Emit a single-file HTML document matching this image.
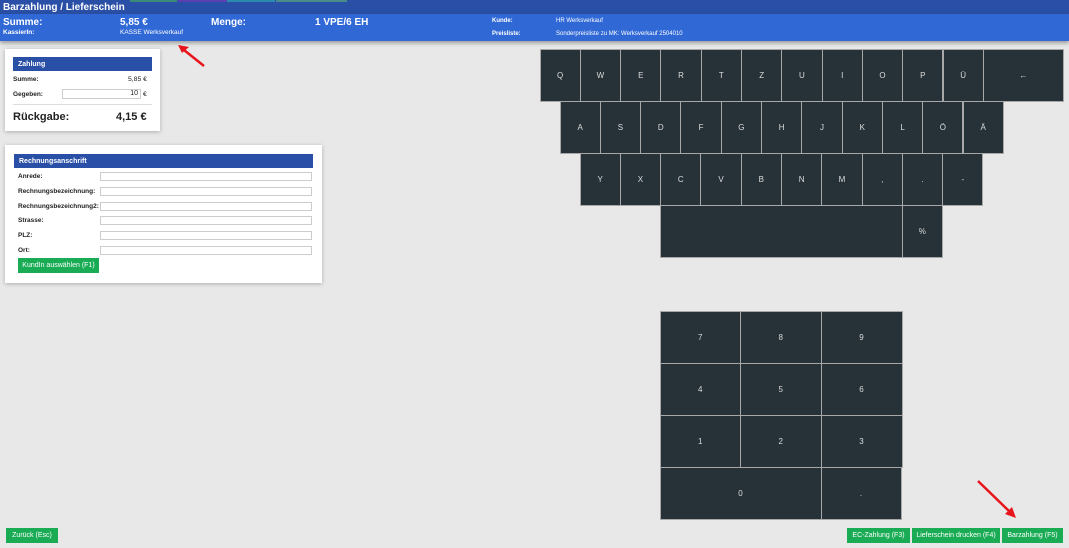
<!DOCTYPE html>
<html><head><meta charset="utf-8"><style>
*{box-sizing:border-box;margin:0;padding:0}
body{width:1069px;height:548px;background:#e8e8e8;font-family:"Liberation Sans",sans-serif;position:relative;overflow:hidden;color:#222}
.a{position:absolute}
.top1{left:0;top:0;width:1069px;height:14px;background:#2a4fa6}
.top2{left:0;top:14px;width:1069px;height:27px;background:#3068d6;box-shadow:0 2px 4px rgba(0,0,0,.35)}
.w{color:#fff}
.k{position:absolute;background:#263238;border:1px solid #a8a8a8;color:#ddd;font-size:8px;display:flex;align-items:center;justify-content:center}
.card{background:#fff;box-shadow:0 1px 4px rgba(0,0,0,.25)}
.hd{background:#2a4fa6;color:#fff;font-weight:bold;font-size:7px;padding-left:5px;display:flex;align-items:center}
.lb{font-size:6.5px;font-weight:bold}
.in{border:1px solid #ccc;background:#fff;height:9px}
.btn{position:absolute;background:#1aab55;color:#fff;font-size:7px;display:flex;align-items:center;justify-content:center;height:15px;top:528px;white-space:nowrap}
</style></head><body>
<div class="a top1"></div>
<div class="a" style="left:130px;top:0;width:47px;height:2px;background:#3a8a7a"></div>
<div class="a" style="left:178px;top:0;width:49px;height:2px;background:#5a3fb0"></div>
<div class="a" style="left:227px;top:0;width:48px;height:2px;background:#2a8ab0"></div>
<div class="a" style="left:276px;top:0;width:71px;height:2px;background:#4a8a8a"></div>
<div class="a w" style="left:3px;top:2px;font-size:10px;font-weight:bold">Barzahlung / Lieferschein</div>
<div class="a top2"></div>
<div class="a w" style="left:3px;top:17px;font-size:10px;font-weight:bold">Summe:</div>
<div class="a w" style="left:120px;top:17px;font-size:10px;font-weight:bold">5,85 €</div>
<div class="a w" style="left:211px;top:17px;font-size:10px;font-weight:bold">Menge:</div>
<div class="a w" style="left:315px;top:17px;font-size:10px;font-weight:bold">1 VPE/6 EH</div>
<div class="a w" style="left:3px;top:29px;font-size:6.5px;font-weight:bold">KassierIn:</div>
<div class="a w" style="left:120px;top:29px;font-size:6.5px">KASSE Werksverkauf</div>
<div class="a w" style="left:492px;top:18px;font-size:6px;font-weight:bold">Kunde:</div>
<div class="a w" style="left:556px;top:18px;font-size:6px">HR Werksverkauf</div>
<div class="a w" style="left:492px;top:31px;font-size:6px;font-weight:bold">Preisliste:</div>
<div class="a w" style="left:556px;top:31px;font-size:6px">Sonderpreisliste zu MK: Werksverkauf 2504010</div>

<div class="a card" style="left:5px;top:49px;width:155px;height:82px"></div>
<div class="a hd" style="left:13px;top:57px;width:139px;height:14px">Zahlung</div>
<div class="a lb" style="left:13px;top:76px">Summe:</div>
<div class="a" style="left:128px;top:76px;font-size:6.8px">5,85 €</div>
<div class="a lb" style="left:13px;top:91px">Gegeben:</div>
<div class="a in" style="left:62px;top:89px;width:79px;height:10px;font-size:7px;text-align:right;padding-right:2px;line-height:8px">10</div>
<div class="a" style="left:143px;top:91px;font-size:6.8px">€</div>
<div class="a" style="left:13px;top:104px;width:139px;height:1px;background:#ddd"></div>
<div class="a" style="left:13px;top:111px;font-size:11px;font-weight:bold">Rückgabe:</div>
<div class="a" style="left:116px;top:111px;font-size:11px;font-weight:bold">4,15 €</div>

<div class="a card" style="left:5px;top:145px;width:317px;height:138px"></div>
<div class="a hd" style="left:14px;top:154px;width:299px;height:14px">Rechnungsanschrift</div>
<div class="a lb" style="left:18px;top:173px">Anrede:</div>
<div class="a in" style="left:100px;top:172px;width:212px"></div>
<div class="a lb" style="left:18px;top:188px">Rechnungsbezeichnung:</div>
<div class="a in" style="left:100px;top:187px;width:212px"></div>
<div class="a lb" style="left:18px;top:203px">Rechnungsbezeichnung2:</div>
<div class="a in" style="left:100px;top:202px;width:212px"></div>
<div class="a lb" style="left:18px;top:217px">Strasse:</div>
<div class="a in" style="left:100px;top:216px;width:212px"></div>
<div class="a lb" style="left:18px;top:232px">PLZ:</div>
<div class="a in" style="left:100px;top:231px;width:212px"></div>
<div class="a lb" style="left:18px;top:247px">Ort:</div>
<div class="a in" style="left:100px;top:246px;width:212px"></div>
<div class="btn" style="left:18px;top:258px;width:81px;height:15px">KundIn auswählen (F1)</div>

<div id="kb"></div>
<script>
var kb=document.getElementById('kb'),h='';
function key(x,y,w,hh,t){h+='<div class="k" style="left:'+x+'px;top:'+y+'px;width:'+w+'px;height:'+hh+'px">'+t+'</div>';}
var W=40.3;
'QWERTZUIOPÜ'.split('').forEach(function(c,i){key(539.5+i*W,49,W+1,53,c)});
key(539.5+11*W,49,1064-539.5-11*W,53,'←');
'ASDFGHJKLÖÄ'.split('').forEach(function(c,i){key(559.5+i*W,101,W+1,53,c)});
'YXCVBNM,.-'.split('').forEach(function(c,i){key(579.5+i*W,153,W+1,53,c)});
key(659.5,205,243,53,'');key(902,205,40.5,53,'%');
var cx=[659.5,740,820.5,901.5],ry=[310.5,362.5,415,467,519.5];
var n=[['7','8','9'],['4','5','6'],['1','2','3']];
for(var r=0;r<3;r++)for(var c=0;c<3;c++)key(cx[c],ry[r],cx[c+1]-cx[c]+1,ry[r+1]-ry[r]+1,n[r][c]);
key(cx[0],ry[3],cx[2]-cx[0]+1,ry[4]-ry[3],'0');key(cx[2],ry[3],cx[3]-cx[2],ry[4]-ry[3],'.');
kb.innerHTML=h;
</script>

<div class="btn" style="left:6px;width:52px">Zurück (Esc)</div>
<div class="btn" style="left:847px;width:63px">EC-Zahlung (F3)</div>
<div class="btn" style="left:912px;width:88px">Lieferschein drucken (F4)</div>
<div class="btn" style="left:1002px;width:61px">Barzahlung (F5)</div>

<svg class="a" style="left:0;top:0" width="1069" height="548">
<g stroke="#e8141c" stroke-width="2.5" fill="#e8141c">
<line x1="204" y1="66" x2="184" y2="50"/>
<polygon points="178,45 189,47 182,53" stroke="none"/>
<line x1="978" y1="481" x2="1010" y2="512"/>
<polygon points="1016,518 1005,514 1012,507" stroke="none"/>
</g></svg>
</body></html>
